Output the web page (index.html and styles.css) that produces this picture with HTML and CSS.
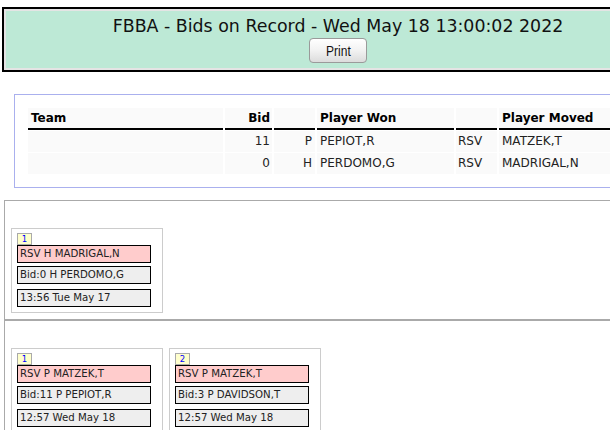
FILE: index.html
```html
<!DOCTYPE html>
<html>
<head>
<meta charset="utf-8">
<title>FBBA - Bids on Record</title>
<link rel="stylesheet" href="styles.css">
</head>
<body>
<div class="header">
  <div class="header-inner">
    <div class="title">FBBA - Bids on Record - Wed May 18 13:00:02 2022</div>
    <button class="print" type="button"><span class="print-label">Print</span></button>
  </div>
</div>

<div class="bids">
  <table class="bid-table">
    <thead>
      <tr>
        <th class="c-team">Team</th>
        <th class="c-bid">Bid</th>
        <th class="c-pos"></th>
        <th class="c-won">Player Won</th>
        <th class="c-rsv"></th>
        <th class="c-moved">Player Moved</th>
      </tr>
    </thead>
    <tbody>
      <tr>
        <td class="c-team"></td>
        <td class="c-bid">11</td>
        <td class="c-pos">P</td>
        <td class="c-won">PEPIOT,R</td>
        <td class="c-rsv">RSV</td>
        <td class="c-moved">MATZEK,T</td>
      </tr>
      <tr>
        <td class="c-team"></td>
        <td class="c-bid">0</td>
        <td class="c-pos">H</td>
        <td class="c-won">PERDOMO,G</td>
        <td class="c-rsv">RSV</td>
        <td class="c-moved">MADRIGAL,N</td>
      </tr>
    </tbody>
  </table>
</div>

<div class="section first">
  <div class="cards">
    <div class="card">
      <div class="badge">1</div>
      <div class="box box-rsv">RSV H MADRIGAL,N</div>
      <div class="box box-bid">Bid:0 H PERDOMO,G</div>
      <div class="box box-time">13:56 Tue May 17</div>
    </div>
  </div>
</div>

<div class="section">
  <div class="cards">
    <div class="card">
      <div class="badge">1</div>
      <div class="box box-rsv">RSV P MATZEK,T</div>
      <div class="box box-bid">Bid:11 P PEPIOT,R</div>
      <div class="box box-time">12:57 Wed May 18</div>
    </div>
    <div class="card">
      <div class="badge">2</div>
      <div class="box box-rsv">RSV P MATZEK,T</div>
      <div class="box box-bid">Bid:3 P DAVIDSON,T</div>
      <div class="box box-time">12:57 Wed May 18</div>
    </div>
  </div>
</div>
</body>
</html>
```

FILE: styles.css
```css
html {
  overflow: hidden;
}

body {
  margin: 0;
  font-family: "DejaVu Sans", Verdana, sans-serif;
  font-size: 12px;
  color: #222;
  background: #fff;
}

/* ---------- header ---------- */
.header {
  width: 672px;
  margin: 7px 0 0 2px;
  border: 2px solid #000;
  padding: 2px;
  background: #e4e4e4;
  box-sizing: border-box;
}

.header-inner {
  background: #bde9d6;
  padding: 3px 0 5px;
}

.title {
  text-align: center;
  font-size: 17.4px;
  line-height: 24px;
  color: #111;
}

.print {
  display: block;
  margin: 0 auto;
  width: 58px;
  height: 25px;
  padding: 0;
  border: 1px solid #9a9a9a;
  border-radius: 4px;
  background: linear-gradient(#ffffff, #f2f2f2 50%, #dcdcdc);
  font-family: "Liberation Sans", Arial, sans-serif;
  font-size: 15px;
  line-height: 23px;
  color: #111;
}

.print-label {
  display: inline-block;
  transform: scaleX(0.8);
}

/* ---------- bids table ---------- */
.bids {
  width: 660px;
  margin: 22px 0 0 14px;
  border: 1px solid #aab0ee;
  padding: 12px 11px;
}

.bid-table {
  table-layout: fixed;
  border-spacing: 2px 1px;
  width: 626px;
}

.bid-table th,
.bid-table td {
  box-sizing: border-box;
  background: #fafafa;
  padding: 3px 3px;
  white-space: nowrap;
  overflow: hidden;
}

.bid-table th {
  font-weight: bold;
  line-height: 14px;
  border-bottom: 2px solid #000;
  color: #000;
  text-align: left;
}

.bid-table td {
  line-height: 15px;
}

.bid-table .c-team { width: 195px; }
.bid-table .c-bid { width: 47px; text-align: right; padding-right: 2px; }
.bid-table .c-pos { width: 41px; text-align: right; }
.bid-table .c-won { width: 137px; }
.bid-table .c-rsv { width: 41px; padding-left: 2px; }
.bid-table .c-moved { width: 153px; }

/* ---------- card sections ---------- */
.section {
  width: 700px;
  margin-left: 4px;
  border: 1px solid #aaa;
  padding: 27px 6px 6px;
}

.section.first {
  margin-top: 12px;
}

.cards {
  display: flex;
  gap: 6px;
  align-items: flex-start;
}

.card {
  width: 152px;
  box-sizing: border-box;
  border: 1px solid #ccc;
  padding: 4px 0 5px 5px;
}

.badge {
  width: 15px;
  height: 12px;
  box-sizing: border-box;
  border: 1px solid #aaa;
  background: #ffffcc;
  color: #0000ff;
  font-size: 8.5px;
  line-height: 10px;
  text-align: center;
}

.box {
  width: 134px;
  height: 18px;
  box-sizing: border-box;
  border: 1px solid #000;
  padding-left: 2px;
  font-size: 10.2px;
  line-height: 16px;
  white-space: nowrap;
  overflow: hidden;
  color: #222;
}

.box-rsv {
  background: #ffcccc;
}

.box-bid {
  background: #eeeeee;
  margin-top: 3px;
}

.box-time {
  background: #eeeeee;
  margin-top: 5px;
}
```
